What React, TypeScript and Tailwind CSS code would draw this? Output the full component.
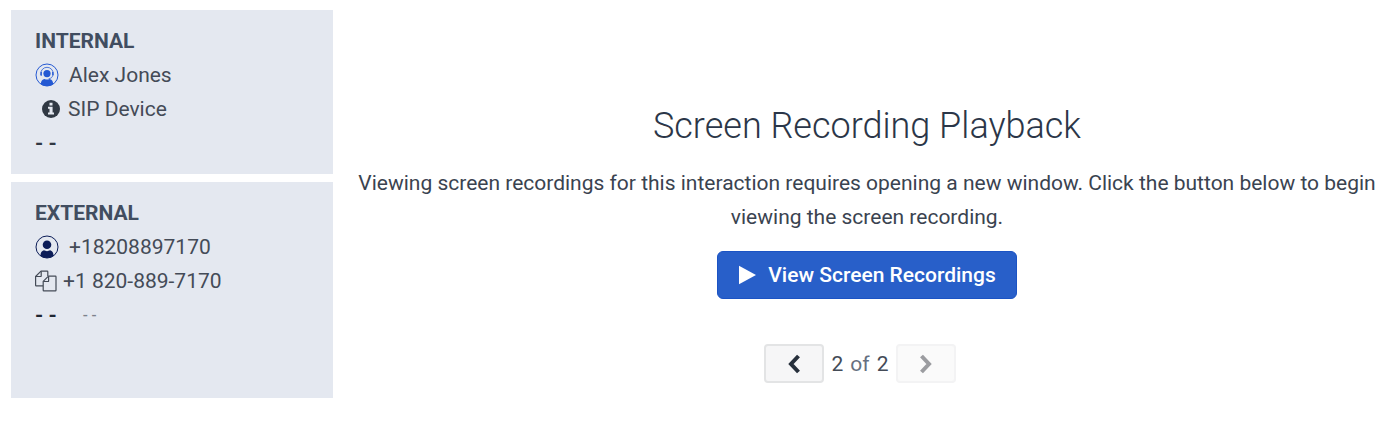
import React from 'react';

const AgentIcon: React.FC = () => (
  <svg viewBox="0 0 24 24" className="h-6 w-6 text-[#2459d3]" fill="none" stroke="currentColor" aria-hidden="true">
    <circle cx="12" cy="12" r="11" strokeWidth="1" />
    <path d="M5.800 12V10.500a6.200 6.200 0 0 1 12.400 0V12" strokeWidth="0.800" />
    <path d="M6.200 9v3.800M17.800 9v3.800" strokeWidth="1.300" />
    <path d="M17.600 13c-.6 1.700-2 2.500-4 2.700" strokeWidth="0.700" />
    <circle cx="12" cy="10.600" r="3.600" fill="currentColor" stroke="none" />
    <path d="M5.800 21.200c.2-3.200 1.400-4.800 3.800-5.200 1.500.8 3.300.8 4.800 0 2.400.4 3.600 2 3.800 5.200-3.700 2.400-8.700 2.400-12.400 0Z" fill="currentColor" stroke="none" />
  </svg>
);

const CallerIcon: React.FC = () => (
  <svg viewBox="0 0 24 24" className="h-6 w-6 text-[#0b1c57]" fill="none" stroke="currentColor" aria-hidden="true">
    <circle cx="12" cy="12" r="11" strokeWidth="1" />
    <circle cx="12" cy="9.800" r="4.300" fill="currentColor" stroke="none" />
    <path d="M5.400 21c.1-3.200 1.300-5.200 3.500-5.700 1.900 1.100 4.300 1.100 6.200 0 2.200.5 3.400 2.500 3.500 5.700-4 2.600-9.200 2.600-13.200 0Z" fill="currentColor" stroke="none" />
  </svg>
);

const InfoIcon: React.FC = () => (
  <svg viewBox="0 0 18 18" className="h-[18px] w-[18px] text-[#303843]" aria-hidden="true">
    <circle cx="9" cy="9" r="9" fill="currentColor" />
    <path d="M7.500 2.800h3v2.600h-3zM6 6.700h4.600v5.800H12v2.100H6v-2.100h1.500V8.800H6z" fill="#e4e8f0" />
  </svg>
);

const CopyIcon: React.FC = () => (
  <svg viewBox="0 0 22 22" className="h-[22px] w-[22px]" fill="none" stroke="currentColor" strokeWidth="1.200" strokeLinejoin="round" aria-hidden="true">
    <path d="M8 15.800H1.200a.6.6 0 0 1-.6-.6V6.500L6 1.100h6.200a.6.6 0 0 1 .6.6V6" />
    <path d="M6.200 1.200v4.700a.6.6 0 0 1-.6.6H.8" />
    <path d="M8.200 11.400 13.500 6.100h6.900a.6.6 0 0 1 .6.6v13.600a.6.6 0 0 1-.6.6H8.800a.6.6 0 0 1-.6-.6Z" />
    <path d="M13.600 6.200v4.700a.6.6 0 0 1-.6.6H8.400" />
  </svg>
);

const Chevron: React.FC<{ d: string }> = ({ d }) => (
  <svg viewBox="0 0 14 20" className="h-5 w-3.5" fill="none" stroke="currentColor" strokeWidth="4" aria-hidden="true">
    <path d={d} />
  </svg>
);

const pagerButton = 'flex h-[39px] w-[60px] items-center justify-center rounded-[4px] border-2 border-[#e3e4e5] bg-[#f6f6f7] text-[#27303c] disabled:border-[#f3f3f4] disabled:bg-[#fafafa] disabled:text-[#9b9ca0]';

export default function App() {
  return (
    <div className="flex items-start gap-[17px] bg-white pt-2.5 pl-[11px] font-['Roboto',sans-serif] text-[21px] leading-[34px] text-[#444b57]">
      {/* Participants */}
      <aside className="flex w-[322px] shrink-0 flex-col gap-2">
        <section className="bg-[#e4e8f0] px-6 py-3.5">
          <h2 className="font-bold text-[#414d60]">INTERNAL</h2>
          <div className="flex items-center gap-2.5">
            <AgentIcon />
            <span>Alex Jones</span>
          </div>
          <div className="flex items-center gap-2 pl-[7px]">
            <InfoIcon />
            <span>SIP Device</span>
          </div>
          <div className="font-bold text-[#303843]">- -</div>
        </section>

        <section className="min-h-[216px] bg-[#e4e8f0] px-6 py-3.5">
          <h2 className="font-bold text-[#414d60]">EXTERNAL</h2>
          <div className="flex items-center gap-2.5">
            <CallerIcon />
            <span>+18208897170</span>
          </div>
          <div className="flex items-center gap-1.5">
            <CopyIcon />
            <span>+1 820-889-7170</span>
          </div>
          <div className="flex items-center gap-[26px] font-bold text-[#1f2733]">
            <span>- -</span>
            <span className="text-[15px] font-medium text-[#7c828c]">- -</span>
          </div>
        </section>
      </aside>

      {/* Playback */}
      <main className="flex min-w-0 flex-1 flex-col items-center pt-[92px] text-center">
        <h1 className="text-[36px] leading-[48px] font-light text-[#2b3648]">Screen Recording Playback</h1>
        <p className="mt-4 px-2 text-[#3a4350]">
          Viewing screen recordings for this interaction requires opening a new window. Click the button below to begin
          viewing the screen recording.
        </p>
        <button
          type="button"
          className="mt-[17px] flex h-12 items-center gap-3 rounded-[6px] border border-[#1b53c4] bg-[#285fc9] px-5 font-medium text-white"
        >
          <svg viewBox="0 0 18 20" className="h-5 w-[18px]" fill="currentColor" aria-hidden="true">
            <path d="M1 .8 18 10 1 19.200Z" />
          </svg>
          View Screen Recordings
        </button>
        <nav aria-label="Recordings" className="mt-[45px] mr-3.5 flex items-center gap-2">
          <button type="button" aria-label="Previous" className={pagerButton}>
            <Chevron d="M11.500 2 4 10l7.500 8" />
          </button>
          <span className="flex gap-[7px]">
            <span>2</span>
            <span className="text-[#667080]">of</span>
            <span>2</span>
          </span>
          <button type="button" aria-label="Next" disabled className={pagerButton}>
            <Chevron d="M2.500 2 10 10l-7.500 8" />
          </button>
        </nav>
      </main>
    </div>
  );
}
